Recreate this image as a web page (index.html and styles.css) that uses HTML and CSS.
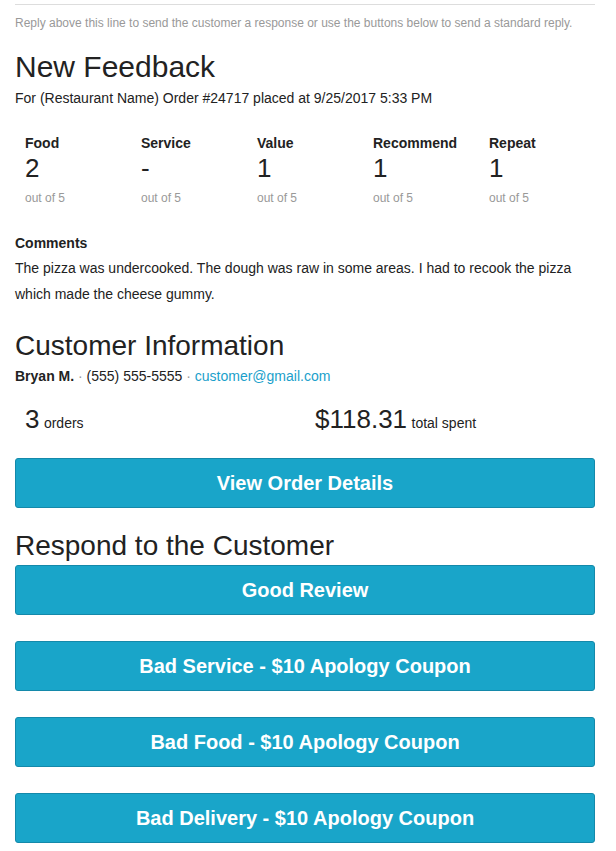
FILE: index.html
```html
<!DOCTYPE html>
<html lang="en">
<head>
<meta charset="utf-8">
<title>New Feedback</title>
<link rel="stylesheet" href="styles.css">
</head>
<body>
<div class="page">
  <div class="rule"></div>
  <p class="reply-note">Reply above this line to send the customer a response or use the buttons below to send a standard reply.</p>

  <h1 class="title">New Feedback</h1>
  <p class="order-line">For (Restaurant Name) Order #24717 placed at 9/25/2017 5:33 PM</p>

  <div class="ratings">
    <div class="rating">
      <div class="rating-label">Food</div>
      <div class="rating-value">2</div>
      <div class="rating-scale">out of 5</div>
    </div>
    <div class="rating">
      <div class="rating-label">Service</div>
      <div class="rating-value">-</div>
      <div class="rating-scale">out of 5</div>
    </div>
    <div class="rating">
      <div class="rating-label">Value</div>
      <div class="rating-value">1</div>
      <div class="rating-scale">out of 5</div>
    </div>
    <div class="rating">
      <div class="rating-label">Recommend</div>
      <div class="rating-value">1</div>
      <div class="rating-scale">out of 5</div>
    </div>
    <div class="rating">
      <div class="rating-label">Repeat</div>
      <div class="rating-value">1</div>
      <div class="rating-scale">out of 5</div>
    </div>
  </div>

  <div class="comments-label">Comments</div>
  <p class="comments">The pizza was undercooked. The dough was raw in some areas. I had to recook the pizza which made the cheese gummy.</p>

  <h2 class="section-title customer-title">Customer Information</h2>
  <p class="contact"><strong>Bryan M.</strong> <span class="dot">&middot;</span> (555) 555-5555 <span class="dot">&middot;</span> <a class="email" href="#">customer@gmail.com</a></p>

  <div class="totals">
    <div class="total"><span class="total-num">3</span> <span class="total-unit">orders</span></div>
    <div class="total"><span class="total-num">$118.31</span> <span class="total-unit">total spent</span></div>
  </div>

  <a class="btn btn-details" href="#">View Order Details</a>

  <h2 class="section-title respond-title">Respond to the Customer</h2>
  <div class="responses">
    <a class="btn" href="#">Good Review</a>
    <a class="btn" href="#">Bad Service - $10 Apology Coupon</a>
    <a class="btn" href="#">Bad Food - $10 Apology Coupon</a>
    <a class="btn" href="#">Bad Delivery - $10 Apology Coupon</a>
  </div>
</div>
</body>
</html>
```

FILE: styles.css
```css
html, body {
  margin: 0;
  padding: 0;
  background: #ffffff;
}

body {
  font-family: "Liberation Sans", Arial, sans-serif;
  color: #222222;
}

.page {
  width: 580px;
  padding: 4px 21px 0 15px;
}

.rule {
  height: 1px;
  background: #dddddd;
}

.reply-note {
  margin: 11px 0 0;
  font-size: 12px;
  line-height: 14px;
  color: #999999;
}

.title {
  margin: 20px 0 0;
  font-size: 30px;
  line-height: 34px;
  font-weight: normal;
}

.order-line {
  margin: 4px 0 0;
  font-size: 14px;
  line-height: 20px;
}

.ratings {
  display: grid;
  grid-template-columns: repeat(5, 1fr);
  margin-top: 25px;
}

.rating {
  padding: 0 10px;
}

.rating-label {
  font-size: 14px;
  line-height: 20px;
  font-weight: bold;
}

.rating-value {
  font-size: 26px;
  line-height: 30px;
}

.rating-scale {
  margin-top: 7px;
  font-size: 12px;
  line-height: 17px;
  color: #999999;
}

.comments-label {
  margin-top: 26px;
  font-size: 14px;
  line-height: 20px;
  font-weight: bold;
}

.comments {
  margin: 2px 0 0;
  font-size: 14px;
  line-height: 26px;
}

.section-title {
  margin: 0;
  font-size: 28px;
  line-height: 32px;
  font-weight: normal;
}

.customer-title {
  margin-top: 23px;
}

.contact {
  margin: 4px 0 0;
  font-size: 14px;
  line-height: 20px;
}

.contact .dot {
  color: #999999;
}

.email {
  color: #1a9fcb;
  text-decoration: none;
}

.totals {
  display: grid;
  grid-template-columns: 1fr 1fr;
  margin-top: 18px;
}

.total {
  padding: 0 10px;
  line-height: 30px;
}

.total-num {
  font-size: 26px;
}

.total-unit {
  font-size: 14px;
}

.btn {
  display: block;
  height: 48px;
  line-height: 48px;
  border: 1px solid #1489aa;
  border-radius: 3px;
  background: #19a5c9;
  color: #ffffff;
  font-size: 20px;
  font-weight: bold;
  text-align: center;
  text-decoration: none;
}

.btn-details {
  margin-top: 20px;
}

.respond-title {
  margin-top: 22px;
}

.responses {
  display: flex;
  flex-direction: column;
  gap: 26px;
  margin-top: 3px;
}
```
